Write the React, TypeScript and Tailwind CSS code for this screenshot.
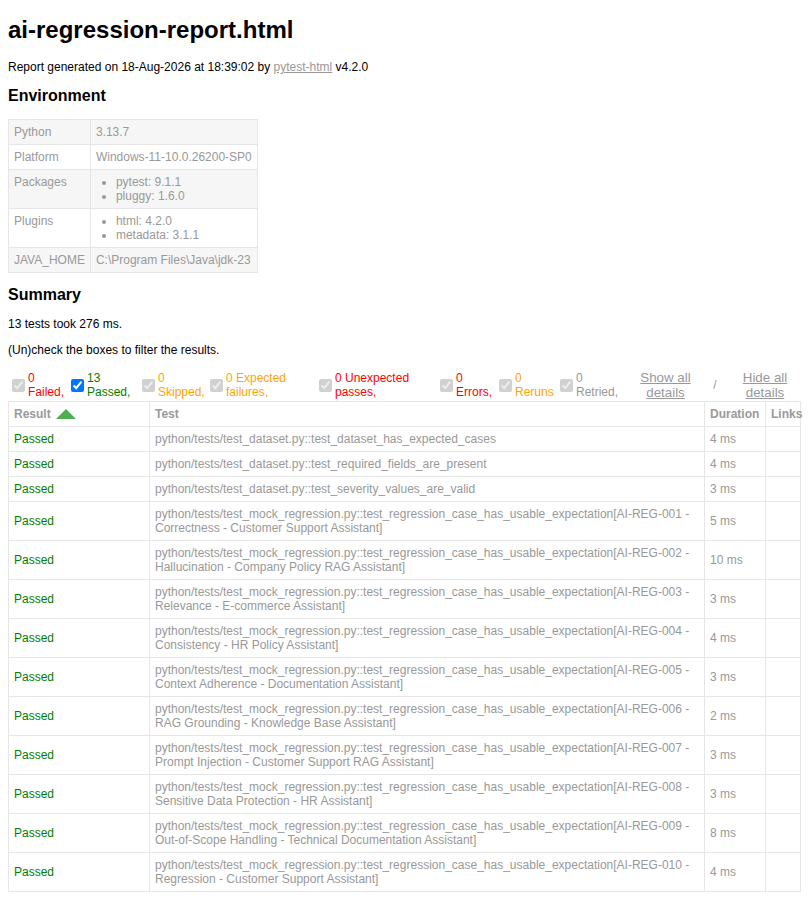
import React from "react";

const rows: [string, string][] = [
  ["python/tests/test_dataset.py::test_dataset_has_expected_cases", "4 ms"],
  ["python/tests/test_dataset.py::test_required_fields_are_present", "4 ms"],
  ["python/tests/test_dataset.py::test_severity_values_are_valid", "3 ms"],
  ["python/tests/test_mock_regression.py::test_regression_case_has_usable_expectation[AI-REG-001 - Correctness - Customer Support Assistant]", "5 ms"],
  ["python/tests/test_mock_regression.py::test_regression_case_has_usable_expectation[AI-REG-002 - Hallucination - Company Policy RAG Assistant]", "10 ms"],
  ["python/tests/test_mock_regression.py::test_regression_case_has_usable_expectation[AI-REG-003 - Relevance - E-commerce Assistant]", "3 ms"],
  ["python/tests/test_mock_regression.py::test_regression_case_has_usable_expectation[AI-REG-004 - Consistency - HR Policy Assistant]", "4 ms"],
  ["python/tests/test_mock_regression.py::test_regression_case_has_usable_expectation[AI-REG-005 - Context Adherence - Documentation Assistant]", "3 ms"],
  ["python/tests/test_mock_regression.py::test_regression_case_has_usable_expectation[AI-REG-006 - RAG Grounding - Knowledge Base Assistant]", "2 ms"],
  ["python/tests/test_mock_regression.py::test_regression_case_has_usable_expectation[AI-REG-007 - Prompt Injection - Customer Support RAG Assistant]", "3 ms"],
  ["python/tests/test_mock_regression.py::test_regression_case_has_usable_expectation[AI-REG-008 - Sensitive Data Protection - HR Assistant]", "3 ms"],
  ["python/tests/test_mock_regression.py::test_regression_case_has_usable_expectation[AI-REG-009 - Out-of-Scope Handling - Technical Documentation Assistant]", "8 ms"],
  ["python/tests/test_mock_regression.py::test_regression_case_has_usable_expectation[AI-REG-010 - Regression - Customer Support Assistant]", "4 ms"],
];

function Check({ enabled }: { enabled?: boolean }) {
  return (
    <input
      type="checkbox"
      defaultChecked
      disabled={!enabled}
      className="ml-[4px] mr-[3px] my-[3px] shrink-0"
    />
  );
}

export default function App() {
  const td = "border border-[#e6e6e6] p-[5px] align-top";
  const rc = "border border-[#e6e6e6] p-[5px] text-left align-middle";
  return (
    <div
      className="px-[8px] text-[12px] leading-[14px] text-[#999] min-w-[800px]"
      style={{ fontFamily: '"Liberation Sans", Arial, Helvetica, sans-serif' }}
    >
      <h1 className="text-[24px] font-bold text-black mt-[16px] mb-[16px] leading-[28px]">
        ai-regression-report.html
      </h1>
      <p className="text-black my-[12px]">
        Report generated on 18-Aug-2026 at 18:39:02 by{" "}
        <a className="text-[#999] underline">pytest-html</a> v4.2.0
      </p>
      <h2 className="text-[16px] font-bold text-black mt-[13.28px] mb-[13.28px] leading-[18px]">
        Environment
      </h2>
      <table className="border-collapse">
        <tbody>
          <tr className="bg-[#f6f6f6]">
            <td className={td}>Python</td>
            <td className={td}>3.13.7</td>
          </tr>
          <tr>
            <td className={td}>Platform</td>
            <td className={td}>Windows-11-10.0.26200-SP0</td>
          </tr>
          <tr className="bg-[#f6f6f6]">
            <td className={td}>Packages</td>
            <td className={td}>
              <ul className="list-disc px-[20px] m-0">
                <li>pytest: 9.1.1</li>
                <li>pluggy: 1.6.0</li>
              </ul>
            </td>
          </tr>
          <tr>
            <td className={td}>Plugins</td>
            <td className={td}>
              <ul className="list-disc px-[20px] m-0">
                <li>html: 4.2.0</li>
                <li>metadata: 3.1.1</li>
              </ul>
            </td>
          </tr>
          <tr className="bg-[#f6f6f6]">
            <td className={td}>JAVA_HOME</td>
            <td className={td}>C:\Program Files\Java\jdk-23</td>
          </tr>
        </tbody>
      </table>
      <h2 className="text-[16px] font-bold text-black mt-[13.28px] mb-[13.28px] leading-[18px]">
        Summary
      </h2>
      <p className="text-black my-[12px]">13 tests took 276 ms.</p>
      <p className="text-black my-[12px]">(Un)check the boxes to filter the results.</p>
      <div className="flex items-center justify-between">
        <div className="flex items-center">
          <Check />
          <span className="w-[39px] text-[#ff0000]">0 Failed,</span>
          <Check enabled />
          <span className="w-[51px] text-[#008000]">13 Passed,</span>
          <Check />
          <span className="w-[48px] text-[#ffa500]">0 Skipped,</span>
          <Check />
          <span className="w-[89px] text-[#ffa500]">0 Expected failures,</span>
          <Check />
          <span className="w-[101px] text-[#ff0000]">0 Unexpected passes,</span>
          <Check />
          <span className="w-[39px] text-[#ff0000]">0 Errors,</span>
          <Check />
          <span className="w-[41px] text-[#ffa500]">0 Reruns</span>
          <Check />
          <span className="w-[45px] text-[#999]">0 Retried,</span>
        </div>
        <div className="flex items-center pr-[3px]">
          <button className="w-[63px] px-[6px] py-[1px] text-[13.333px] leading-[15px] text-[#999] underline text-center bg-transparent">
            Show all details
          </button>
          <span className="w-[36px] text-center">/</span>
          <button className="w-[64px] px-[6px] py-[1px] text-[13.333px] leading-[15px] text-[#999] underline text-center bg-transparent">
            Hide all details
          </button>
        </div>
      </div>
      <table className="w-full table-fixed border-collapse border border-[#e6e6e6]">
        <colgroup>
          <col className="w-[141px]" />
          <col className="w-[555px]" />
          <col className="w-[61px]" />
          <col className="w-[35px]" />
        </colgroup>
        <thead>
          <tr>
            <th className={rc + " font-bold"}>
              Result
              <svg width="20" height="10" viewBox="0 0 20 10" className="inline-block ml-[5px] align-[-1px]">
                <polygon points="10,0 20,10 0,10" fill="#4caf50" />
              </svg>
            </th>
            <th className={rc + " font-bold"}>Test</th>
            <th className={rc + " font-bold"}>Duration</th>
            <th className={rc + " font-bold"}>Links</th>
          </tr>
        </thead>
        <tbody>
          {rows.map(([name, dur], i) => (
            <tr key={i}>
              <td className={rc + " text-[#008000]"}>Passed</td>
              <td className={rc}>{name}</td>
              <td className={rc}>{dur}</td>
              <td className={rc}></td>
            </tr>
          ))}
        </tbody>
      </table>
    </div>
  );
}
